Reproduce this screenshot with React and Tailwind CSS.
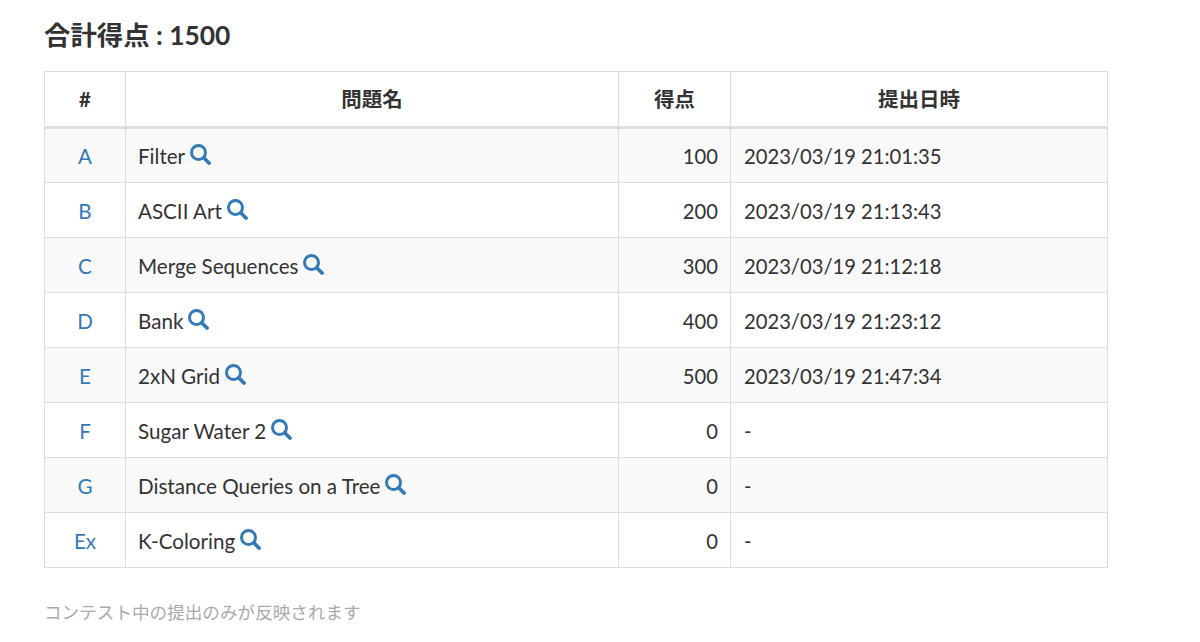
import React from "react";

const rows = [
    { id: "A", name: "Filter", score: 100, time: "2023/03/19 21:01:35" },
    { id: "B", name: "ASCII Art", score: 200, time: "2023/03/19 21:13:43" },
    { id: "C", name: "Merge Sequences", score: 300, time: "2023/03/19 21:12:18" },
    { id: "D", name: "Bank", score: 400, time: "2023/03/19 21:23:12" },
    { id: "E", name: "2xN Grid", score: 500, time: "2023/03/19 21:47:34" },
    { id: "F", name: "Sugar Water 2", score: 0, time: "-" },
    { id: "G", name: "Distance Queries on a Tree", score: 0, time: "-" },
    { id: "Ex", name: "K-Coloring", score: 0, time: "-" },
];

const SearchIcon = () => (
    <svg viewBox="0 0 21 21" className="inline-block w-[21px] h-[21px] ml-[5px] relative top-[-4px]" fill="none" stroke="#337ab7">
        <circle cx="8.5" cy="8.5" r="7" strokeWidth="3" />
        <path d="M14 14 L19 19" strokeWidth="3.8" strokeLinecap="round" />
    </svg>
);

const App = () => {
    return (
        <div className="w-[1200px] h-[642px] overflow-hidden bg-white pl-[44px] pt-[19px] text-[#333] font-['Lato','Noto_Sans_CJK_JP',sans-serif]">
            <h3 className="text-[26.4px] leading-[33px] font-bold mb-[19px]">合計得点 : 1500</h3>
            <table className="w-[1064px] table-fixed border-collapse text-[20.6px]">
                <thead>
                    <tr className="h-[56px] text-[20.5px]">
                        <th className="w-[81px] border border-[#ddd] border-b-[3px] text-center">#</th>
                        <th className="w-[493px] border border-[#ddd] border-b-[3px] text-center">問題名</th>
                        <th className="w-[112px] border border-[#ddd] border-b-[3px] text-center">得点</th>
                        <th className="border border-[#ddd] border-b-[3px] text-center">提出日時</th>
                    </tr>
                </thead>
                <tbody>
                    {rows.map((row, index) => (
                        <tr key={row.id} className={index % 2 === 0 ? "h-[55px] bg-[#f9f9f9]" : "h-[55px]"}>
                            <td className="border border-[#ddd] pt-[2px] text-center text-[#337ab7]">{row.id}</td>
                            <td className="border border-[#ddd] pt-[2px] px-[12px] whitespace-nowrap">
                                {row.name}
                                <SearchIcon />
                            </td>
                            <td className="border border-[#ddd] pt-[2px] px-[12px] text-right text-[20.2px]">{row.score}</td>
                            <td className="border border-[#ddd] pt-[2px] px-[13px] text-[20.2px]">{row.time}</td>
                        </tr>
                    ))}
                </tbody>
            </table>
            <p className="mt-[33px] text-[17.6px] leading-[24px] text-[#aaa]">コンテスト中の提出のみが反映されます</p>
        </div>
    );
};

export default App;
